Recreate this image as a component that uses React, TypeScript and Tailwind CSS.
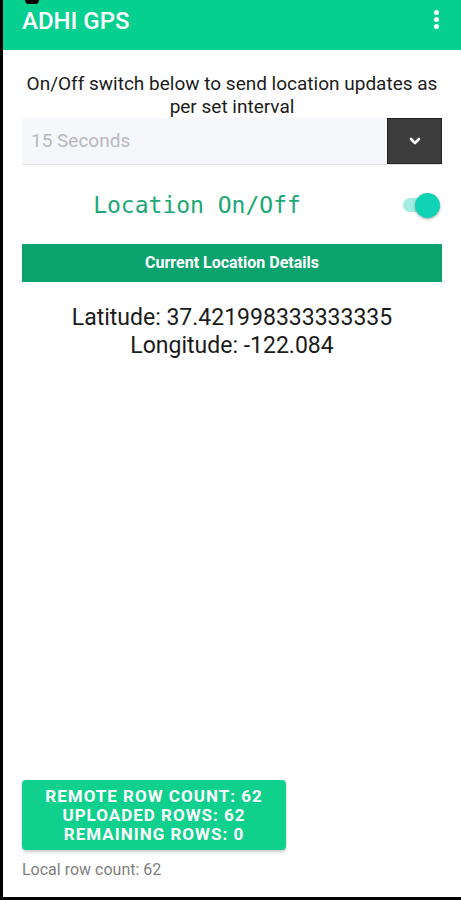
import React from "react";

export default function App() {
  return (
    <div
      className="relative flex h-[900px] w-[461px] flex-col overflow-hidden border-b-[3px] border-l-[3px] border-black bg-white"
      style={{ fontFamily: "Roboto, 'Noto Sans', sans-serif" }}
    >
      <div className="absolute left-[22px] top-0 h-[4px] w-[14px] rounded-b-full bg-black" />
      <header className="flex h-[50px] shrink-0 items-start justify-between bg-[#06d08f] pl-[19px] pr-[22px]">
        <h1 className="pt-[9px] text-[24px] font-medium leading-none text-white">ADHI GPS</h1>
        <div className="flex flex-col items-center gap-[2px] pt-[10px]">
          <span className="h-[5px] w-[5px] rounded-full bg-white" />
          <span className="h-[5px] w-[5px] rounded-full bg-white" />
          <span className="h-[5px] w-[5px] rounded-full bg-white" />
        </div>
      </header>

      <main className="flex flex-1 flex-col px-[19px]">
        <p className="mt-[22px] text-center text-[19px] leading-[23px] text-[#1b1b1b]">
          On/Off switch below to send location updates as per set interval
        </p>

        <div className="flex h-[47px] items-stretch border-b border-[#e2e2e6] bg-[#f6f7fb]">
          <div className="flex flex-1 items-center pl-[9px] text-[19px] text-[#b9b9bd]">15 Seconds</div>
          <div className="flex w-[55px] items-center justify-center border border-[#222] bg-[#3d3d3d]">
            <svg width="14" height="10" viewBox="0 0 14 10">
              <path d="M3 3 L7 7 L11 3" stroke="white" strokeWidth="2.6" fill="none" strokeLinecap="round" strokeLinejoin="round" />
            </svg>
          </div>
        </div>

        <div className="mt-[22px] flex h-[36px] items-center">
          <div
            className="flex-1 pr-[31px] text-center text-[23px] text-[#1aa874]"
            style={{ fontFamily: "'DejaVu Sans Mono', monospace" }}
          >
            Location On/Off
          </div>
          <div className="relative mr-[2px] h-[16px] w-[37px]">
            <div className="absolute left-0 top-[1px] h-[14px] w-[30px] rounded-full bg-[#a3eee2]" />
            <div className="absolute right-0 top-[-4px] h-[25px] w-[25px] rounded-full bg-[#0fd3b4] shadow-[0_1px_3px_rgba(0,0,0,0.35)]" />
          </div>
        </div>

        <div className="mt-[21px] flex h-[38px] items-center justify-center bg-[#0aa36d] text-[16px] font-bold text-white">
          Current Location Details
        </div>

        <div className="mt-[22px] text-center text-[23px] leading-[28px] text-[#1b1b1b]">
          <div>Latitude: 37.421998333333335</div>
          <div>Longitude: -122.084</div>
        </div>

        <div className="flex-1" />

        <div className="flex w-[264px] flex-col items-center rounded-[4px] bg-[#0fd08d] pb-[6px] pt-[7px] text-[17px] font-bold uppercase leading-[19px] tracking-[1px] text-white shadow-[0_2px_3px_rgba(0,0,0,0.2)]">
          <span>Remote row count: 62</span>
          <span>Uploaded rows: 62</span>
          <span>Remaining rows: 0</span>
        </div>
        <p className="mb-[15px] mt-[8px] text-[16px] leading-[24px] text-[#808080]">Local row count: 62</p>
      </main>
    </div>
  );
}
